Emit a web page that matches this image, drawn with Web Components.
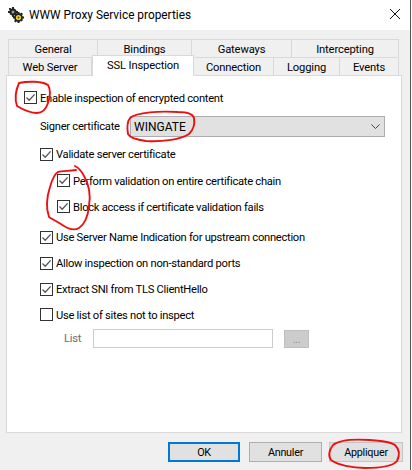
<!DOCTYPE html>
<html>
<head>
<meta charset="utf-8">
<title>WWW Proxy Service properties</title>
<style>
  html, body { margin: 0; height: 100%; background: #fff; overflow: hidden; }
  body { font: 11px Roboto, "Liberation Sans", sans-serif; color: #000; }
</style>
</head>
<body>
<proxy-dialog></proxy-dialog>

<script>
class TitleBar extends HTMLElement {
  constructor() {
    super();
    this.attachShadow({ mode: 'open' }).innerHTML = `
    <style>
      :host { display: flex; align-items: center; height: 30px; background: #fff; }
      svg.logo { margin-left: 8px; margin-right: 5px; flex: none; margin-top: -1px; }
      span { flex: 1; white-space: nowrap; font-size: 11.85px; margin-top: -1px; }
      svg.close { margin-right: 10px; margin-top: -3px; flex: none; }
    </style>
    <svg class="logo" width="16" height="16" viewBox="0 0 16 16">
      <g fill="#222">
        <circle cx="5" cy="5" r="3.6"/>
        <path d="M4 0h2v2H4zM4 8h2v2H4zM0 4h2v2H0zM8 4h2v2H8zM1 1l1.5 0 1 1-1.5 1.5-1-1zM7.5 6.5l1.5 1.5-1 1-1.5-1.5z"/>
        <circle cx="10.5" cy="10.5" r="4.4"/>
        <path d="M9.5 5h2v2h-2zM9.5 14h2v2h-2zM5 9.5h2v2H5zM14 9.5h2v2h-2zM6 7l1.5-1.5 1.5 1.5-1.5 1.5zM12 13l1.5-1.5 1.5 1.5-1.5 1.5zM12 7l1.5-1.5 1.5 1.5-1.5 1.5zM6 14l1.5-1.5 1.5 1.5-1.5 1.5z"/>
      </g>
      <circle cx="5" cy="5" r="1.5" fill="#999"/>
      <circle cx="10.5" cy="10.5" r="2.6" fill="#f2d21f"/>
      <circle cx="10.5" cy="10.5" r="1" fill="#444"/>
    </svg>
    <span><slot></slot></span>
    <svg class="close" width="10" height="10" viewBox="0 0 10 10">
      <path d="M0 0L10 10M10 0L0 10" stroke="#111" stroke-width="1" fill="none"/>
    </svg>
    `;
  }
}

class WinTab extends HTMLElement {
  constructor() {
    super();
    this.attachShadow({ mode: 'open' }).innerHTML = `
    <style>
      :host {
        display: flex; align-items: center; justify-content: center; flex: none;
        box-sizing: border-box; height: 18px; padding-top: 1px;
        background: #f0f0f0; border: 1px solid #d9d9d9; border-left-width: 0; border-bottom-width: 0;
        white-space: nowrap; font-size: 11.2px; letter-spacing: -0.15px;
      }
      :host([first]) { border-left-width: 1px; }
      :host([selected]) {
        background: #fff; height: 21px; margin-top: -2px; margin-bottom: -1px;
        border-left-width: 1px; position: relative; z-index: 2;
        padding-top: 0; padding-bottom: 2px;
      }
    </style>
    <slot></slot>
    `;
  }

  connectedCallback() {
    this.style.width = this.getAttribute('w') + 'px';
  }
}

class TabRow extends HTMLElement {
  constructor() {
    super();
    this.attachShadow({ mode: 'open' }).innerHTML = `
    <style>
      :host { display: flex; height: 18px; padding-left: 2px; }
    </style>
    <slot></slot>
    `;
  }
}

class WinCheck extends HTMLElement {
  constructor() {
    super();
    this.attachShadow({ mode: 'open' }).innerHTML = `
    <style>
      :host { display: flex; align-items: center; height: 13px; white-space: nowrap; }
      .box { flex: none; box-sizing: border-box; width: 13px; height: 13px; border: 1px solid #333; background: #fff; margin-right: 3px; }
      svg { display: none; }
      :host([checked]) svg { display: block; }
      :host([low]) span { margin-top: 2px; }
    </style>
    <div class="box">
      <svg width="11" height="11" viewBox="0 0 11 11">
        <path d="M1.5 5.5L4.2 8.2L9.6 2.4" stroke="#555" stroke-width="1.3" fill="none"/>
      </svg>
    </div>
    <span><slot></slot></span>
    `;
  }
}

class WinSelect extends HTMLElement {
  constructor() {
    super();
    this.attachShadow({ mode: 'open' }).innerHTML = `
    <style>
      :host {
        display: flex; align-items: center; justify-content: space-between;
        box-sizing: border-box; width: 255px; height: 21px; padding: 0 4px 0 3px;
        background: #e1e1e1; border: 1px solid #adadad; font-size: 12px; letter-spacing: 0;
      }
    </style>
    <slot></slot>
    <svg width="9" height="5" viewBox="0 0 9 5">
      <path d="M0.5 0.5L4.5 4.5L8.5 0.5" stroke="#444" fill="none"/>
    </svg>
    `;
  }
}

class WinButton extends HTMLElement {
  constructor() {
    super();
    this.attachShadow({ mode: 'open' }).innerHTML = `
    <style>
      :host {
        display: flex; align-items: center; justify-content: center; flex: none;
        box-sizing: border-box; height: 20px;
        background: #e1e1e1; border: 1px solid #adadad; font-size: 10.8px; letter-spacing: -0.25px;
      }
      :host([primary]) { border: 2px solid #0078d7; }
      :host([soft]) { border-color: #c4c4c4; }
    </style>
    <slot></slot>
    `;
  }

  connectedCallback() {
    this.style.width = this.getAttribute('w') + 'px';
  }
}

// the red pen marks someone drew over the screenshot
class InkMarks extends HTMLElement {
  constructor() {
    super();
    this.attachShadow({ mode: 'open' }).innerHTML = `
    <style>
      :host { position: absolute; left: 0; top: 0; width: 412px; height: 470px; pointer-events: none; z-index: 5; }
      svg { display: block; }
      path { fill: none; stroke: #ee0f0f; stroke-width: 1.9; stroke-linecap: round; stroke-linejoin: round; }
    </style>
    <svg width="412" height="470" viewBox="0 0 412 470">
      <path d="M19 83C28 81 42 81 48 85C51 90 50 97 48 103C46 109 43 113 37 113C30 113 22 109 17 106C15 100 15 92 19 83"/>
      <path d="M130 118C137 112 160 111 178 112C186 112 193 114 194 118C195 124 193 130 189 134C180 140 160 142 146 141C138 140 130 138 128 134C127 128 127 122 130 118"/>
      <path d="M75 166C79 168 82 172 84 176C89 184 91 196 89 206C88 216 85 224 79 228C74 231 69 229 64 226C58 222 52 219 49 217C46 208 47 196 50 187C52 180 54 174 58 172C62 171 68 171 76 170"/>
      <path d="M333 445C340 439 355 439 370 440C380 441 390 441 395 445C399 449 400 455 397 461C393 466 380 468 365 468C352 468 338 465 331 460C328 456 329 450 333 445"/>
    </svg>
    `;
  }
}

class ProxyDialog extends HTMLElement {
  constructor() {
    super();
    this.attachShadow({ mode: 'open' }).innerHTML = `
    <style>
      :host {
        display: block; position: relative; width: 411px; height: 470px; box-sizing: border-box;
        border-right: 1px solid #555; background: #f0f0f0;
      }
      .body { padding-top: 9px; }
      .tabs { margin-left: 6px; position: relative; }
      .panel {
        box-sizing: border-box; margin-left: 6px; width: 396px; height: 358px;
        background: #fff; border: 1px solid #d9d9d9;
        padding: 15px 0 0 17px; font-size: 11.2px; letter-spacing: -0.28px;
      }
      .row { display: flex; align-items: center; }
      .signer { margin: 12px 0 0 16px; }
      .signer label { width: 90px; flex: none; white-space: nowrap; }
      win-check.indent { margin-left: 16px; }
      win-check.sub { margin-left: 33px; }
      .mt11 { margin-top: 11px; }
      .mt12 { margin-top: 12px; }
      .mt13 { margin-top: 13px; }
      .mt18 { margin-top: 18px; }
      .list { margin: 8px 0 0 40px; color: #6d6d6d; }
      .list label { width: 29px; flex: none; }
      .field { box-sizing: border-box; width: 180px; height: 19px; border: 1px solid #ccc; background: #fff; }
      .more {
        box-sizing: border-box; width: 25px; height: 18px; margin-left: 11px; margin-top: 1px;
        background: #ccc; border: 1px solid #bfbfbf; color: #8a8a8a;
        display: flex; align-items: center; justify-content: center; font-size: 10px;
      }
      .footer { display: flex; justify-content: flex-end; padding: 9px 7px 0 0; }
      .footer win-button + win-button { margin-left: 9px; }
      .footer win-button.apply { margin-left: 7px; }
    </style>
    <title-bar>WWW Proxy Service properties</title-bar>
    <div class="body">
      <div class="tabs">
        <tab-row>
          <win-tab w="90" first>General</win-tab>
          <win-tab w="94">Bindings</win-tab>
          <win-tab w="100">Gateways</win-tab>
          <win-tab w="107">Intercepting</win-tab>
        </tab-row>
        <tab-row>
          <win-tab w="84" first>Web Server</win-tab>
          <win-tab w="102" selected>SSL Inspection</win-tab>
          <win-tab w="80">Connection</win-tab>
          <win-tab w="66">Logging</win-tab>
          <win-tab w="59">Events</win-tab>
        </tab-row>
      </div>
      <div class="panel">
        <win-check checked low>Enable inspection of encrypted content</win-check>
        <div class="row signer">
          <label>Signer certificate</label>
          <win-select>WINGATE</win-select>
        </div>
        <win-check class="indent mt11" checked>Validate server certificate</win-check>
        <win-check class="sub mt13" checked low>Perform validation on entire certificate chain</win-check>
        <win-check class="sub mt13" checked low>Block access if certificate validation fails</win-check>
        <win-check class="indent mt18" checked>Use Server Name Indication for upstream connection</win-check>
        <win-check class="indent mt13" checked>Allow inspection on non-standard ports</win-check>
        <win-check class="indent mt13" checked>Extract SNI from TLS ClientHello</win-check>
        <win-check class="indent mt12" low>Use list of sites not to inspect</win-check>
        <div class="row list">
          <label>List</label>
          <div class="field"></div>
          <div class="more">...</div>
        </div>
      </div>
      <div class="footer">
        <win-button w="72" primary>OK</win-button>
        <win-button w="73">Annuler</win-button>
        <win-button class="apply" w="74" soft>Appliquer</win-button>
      </div>
    </div>
    <ink-marks></ink-marks>
    `;
  }
}

customElements.define('title-bar', TitleBar);
customElements.define('win-tab', WinTab);
customElements.define('tab-row', TabRow);
customElements.define('win-check', WinCheck);
customElements.define('win-select', WinSelect);
customElements.define('win-button', WinButton);
customElements.define('ink-marks', InkMarks);
customElements.define('proxy-dialog', ProxyDialog);
</script>
</body>
</html>
